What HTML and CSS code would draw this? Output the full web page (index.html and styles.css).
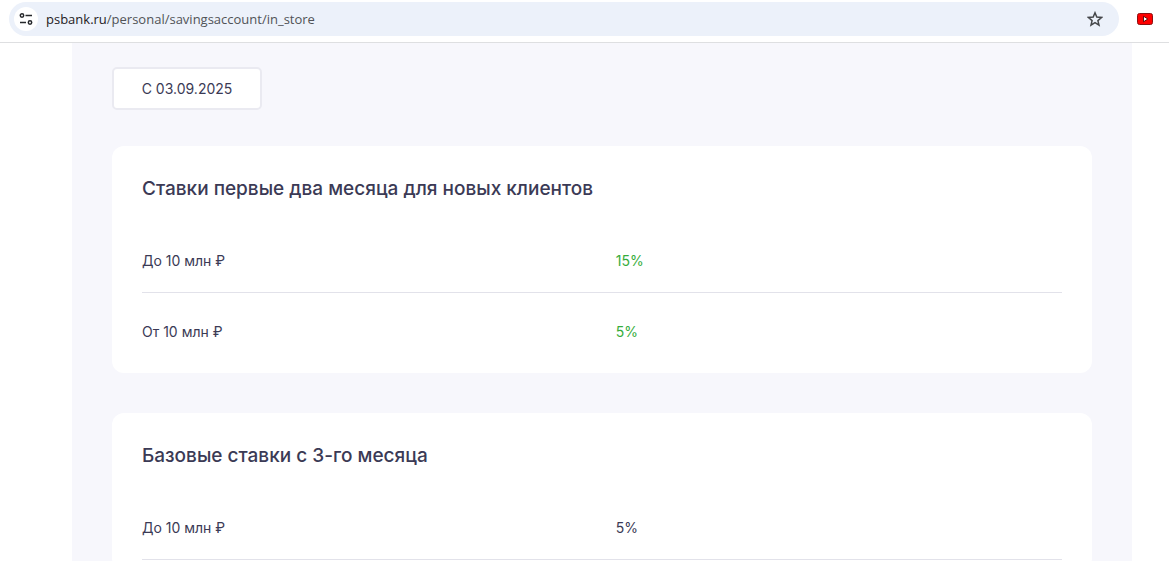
FILE: index.html
```
<!DOCTYPE html>
<html lang="ru">
<head>
    <meta charset="UTF-8">
    <meta name="viewport" content="width=device-width, initial-scale=1.0">
    <title>Накопительный счет</title>
    <link rel="stylesheet" href="styles.css">
</head>
<body>
    <header class="toolbar">
        <div class="address-bar">
            <button class="site-info" type="button" aria-label="Сведения о сайте">
                <svg width="14" height="14" viewBox="0 0 14 14" fill="none" stroke="#26282b" stroke-width="1.5">
                    <circle cx="3" cy="3.5" r="1.7"/>
                    <path d="M6.5 3.5H13M1 10.5h6"/>
                    <circle cx="11" cy="10.5" r="1.7"/>
                </svg>
            </button>
            <a class="url" href="#"><span class="domain">psbank.ru</span>/personal/savingsaccount/in_store</a>
            <button class="bookmark" type="button" aria-label="Добавить в закладки">
                <svg width="16" height="16" viewBox="0 0 16 16" fill="none" stroke="#45474a" stroke-width="1.5">
                    <path d="M8 1.8l1.8 4.3 4.7.4-3.6 3.1 1.1 4.6L8 11.7l-4 2.5 1.1-4.6L1.5 6.5l4.7-.4z"/>
                </svg>
            </button>
        </div>
        <button class="extension" type="button" aria-label="YouTube">
            <svg width="16" height="12" viewBox="0 0 16 12">
                <rect x="0.5" y="0.5" width="15" height="11" rx="2" fill="#f00" stroke="#8c1010"/>
                <path d="M6.5 3.2v5.6L10.8 6z" fill="#fff" stroke="#500" stroke-width="0.9"/>
            </svg>
        </button>
    </header>

    <main class="page">
        <section class="rates">
            <button class="date-tab" type="button">С 03.09.2025</button>

            <article class="card">
                <h2>Ставки первые два месяца для новых клиентов</h2>
                <table>
                    <tr>
                        <th scope="row">До 10 млн ₽</th>
                        <td class="promo">15%</td>
                    </tr>
                    <tr>
                        <th scope="row">От 10 млн ₽</th>
                        <td class="promo">5%</td>
                    </tr>
                </table>
            </article>

            <article class="card">
                <h2>Базовые ставки с 3-го месяца</h2>
                <table class="continued">
                    <tr>
                        <th scope="row">До 10 млн ₽</th>
                        <td>5%</td>
                    </tr>
                </table>
            </article>
        </section>
    </main>
</body>
</html>
```
FILE: styles.css
```
* {
    box-sizing: border-box;
}

body {
    display: flex;
    flex-direction: column;
    height: 100vh;
    margin: 0;
    overflow: hidden;
    background: #fff;
    color: #3b3a55;
    font-family: Inter, "Liberation Sans", sans-serif;
    font-size: 14px;
    line-height: 24px;
}

button {
    padding: 0;
    border: none;
    background: none;
    color: inherit;
    font: inherit;
    cursor: pointer;
}

svg {
    display: block;
}

.toolbar {
    display: flex;
    flex-shrink: 0;
    align-items: center;
    gap: 18px;
    padding: 2px 16px 6px 9px;
    border-bottom: 1px solid #dedfe1;
}

.address-bar {
    display: flex;
    flex: 1;
    align-items: center;
    height: 34px;
    padding: 0 16px 0 5px;
    border-radius: 17px;
    background: #ecf1fa;
}

.site-info {
    display: flex;
    align-items: center;
    justify-content: center;
    width: 24px;
    height: 24px;
    border-radius: 50%;
    background: #fff;
}

.url {
    flex: 1;
    margin-left: 8px;
    color: #505357;
    font-family: "Open Sans", "Noto Sans", sans-serif;
    font-size: 13px;
    text-decoration: none;
}

.domain {
    color: #1f2023;
}

.page {
    flex: 1;
    min-height: 0;
    padding: 0 37px 0 72px;
    overflow: hidden;
}

.rates {
    min-height: 100%;
    padding: 24px 40px 40px;
    background: #f7f7fc;
}

.date-tab {
    display: block;
    min-width: 150px;
    height: 43px;
    margin-bottom: 36px;
    border: 2px solid #eaeaf1;
    border-radius: 5px;
    background: #fff;
}

.card {
    margin-bottom: 40px;
    padding: 31px 30px 10px;
    border-radius: 12px;
    background: #fff;
}

h2 {
    margin: 0 0 21px;
    font-size: 19px;
    font-weight: 500;
    line-height: 24px;
}

table {
    width: 100%;
    border-spacing: 0;
}

th,
td {
    padding: 27px 0 19px;
    border-bottom: 1px solid #e2e2ea;
    font-weight: 400;
    text-align: left;
}

th {
    width: 51.5%;
}

table:not(.continued) tr:last-child > * {
    border-bottom: none;
}

.promo {
    color: #37ad3c;
}
```
